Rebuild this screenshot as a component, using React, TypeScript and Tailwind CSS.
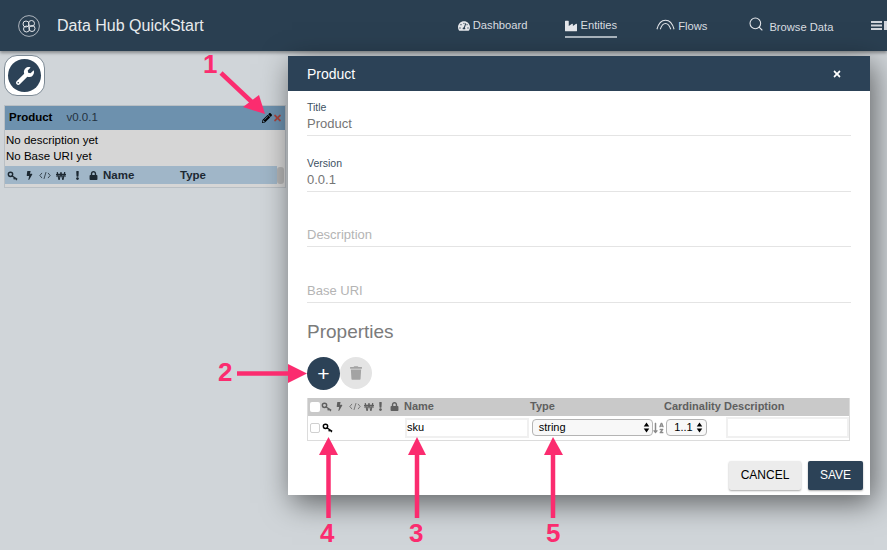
import { Search } from 'lucide-react';
import {
  FaBolt,
  FaExclamation,
  FaIndustry,
  FaLock,
  FaPencilAlt,
  FaSortAlphaDown,
  FaTachometerAlt,
  FaTimes,
  FaTrash,
  FaWonSign,
  FaWrench,
} from 'react-icons/fa';

const font = { fontFamily: '"Liberation Sans", Arial, sans-serif' };

function KeyIcon({ className }: { className?: string }) {
  return (
    <svg viewBox="0 0 14 12" className={className} fill="none" stroke="currentColor">
      <circle cx="4" cy="4" r="2.6" strokeWidth="1.7" />
      <path d="M6 6l6 4M9 8l-1 2M11.5 9.5l-1 1.5" strokeWidth="1.6" />
    </svg>
  );
}

function CodeIcon({ className }: { className?: string }) {
  return (
    <svg viewBox="0 0 14 10" className={className} fill="none" stroke="currentColor" strokeWidth="0.9">
      <path d="M3.5 2L1 5l2.500 3M10.500 2L13 5l-2.500 3M8.200 1L5.800 9" />
    </svg>
  );
}

function Carets() {
  return (
    <svg viewBox="0 0 7 12" className="h-[11px] w-[7px] text-black" fill="currentColor">
      <path d="M3.500 0.500L6.500 4.800H0.500zM3.500 11.500L0.500 7.200H6.500z" />
    </svg>
  );
}

function Logo() {
  return (
    <svg viewBox="0 0 22 22" className="h-[22px] w-[22px] text-gray-200" fill="none" stroke="currentColor" strokeWidth="1">
      <circle cx="11" cy="11" r="10.400" strokeWidth="0.700" />
      <circle cx="8" cy="9" r="3" />
      <circle cx="13.500" cy="8.500" r="3" />
      <circle cx="8.500" cy="14" r="3" />
      <circle cx="14" cy="13.500" r="3" />
    </svg>
  );
}

function FlowsIcon() {
  return (
    <svg viewBox="0 0 20 11" className="mb-[5px] h-[11px] w-[19px] text-gray-200" fill="none" stroke="currentColor" strokeWidth="1.100">
      <path d="M1 10.500C3 3 7 1 10 1s7 2 9 9.500" />
      <path d="M4.500 10.500C6 6 8 4.500 10 4.500s4 1.500 5.500 6" />
    </svg>
  );
}

function NavLink({ icon, label, active }: { icon: React.ReactNode; label: string; active?: boolean }) {
  return (
    <div className={`flex items-center gap-[3px] ${active ? 'mt-[2px] h-[22px] border-b-2 border-[#a9b4bd]' : 'h-[20px]'}`}>
      {icon}
      <span className="whitespace-nowrap text-[11.2px] text-[#d9dde0]">{label}</span>
    </div>
  );
}

function Navbar() {
  return (
    <div className="flex h-[51px] items-center overflow-hidden bg-[#2a3f51] shadow-[0_2px_3px_rgba(0,0,0,0.35)]">
      <div className="ml-[18px] shrink-0">
        <Logo />
      </div>
      <div className="ml-[17px] shrink-0 whitespace-nowrap text-[16px] text-[#e8ebed]">Data Hub QuickStart</div>
      <div className="ml-[254px] flex shrink-0 items-center">
        <NavLink icon={<FaTachometerAlt className="h-[12px] w-[12px] text-gray-200" />} label="Dashboard" />
        <div className="ml-[38px]">
          <NavLink active icon={<FaIndustry className="h-[12px] w-[12px] text-gray-200" />} label="Entities" />
        </div>
        <div className="ml-[39px] mt-[2px]">
          <NavLink icon={<FlowsIcon />} label="Flows" />
        </div>
        <div className="ml-[41px] mt-[1px] flex items-center gap-[5px]">
          <Search className="mb-[5px] h-[16px] w-[16px] text-gray-200" strokeWidth={1.600} />
          <span className="mt-[2px] whitespace-nowrap text-[11.2px] text-[#d9dde0]">Browse Data</span>
        </div>
        <svg viewBox="0 0 16 10" className="ml-[38px] h-[10px] w-[16px] shrink-0 text-gray-300" fill="currentColor">
          <path d="M0 0h11v2H0zM0 3.500h11v2H0zM0 7h11v2H0zM13 0h3v9h-3z" />
        </svg>
      </div>
    </div>
  );
}

function EntityCard() {
  return (
    <div className="ml-1 mt-[9px] w-[282px] border border-[#b9bfc4] bg-[#d6d6d6] text-[11.500px] text-black">
      <div className="flex h-[24px] items-center bg-[#6d91ae] pl-[4px] pr-[3px]">
        <span className="font-bold">Product</span>
        <span className="ml-[14px] text-[#24323f]">v0.0.1</span>
        <FaPencilAlt className="ml-auto h-[10px] w-[10px] text-black" />
        <FaTimes className="ml-px h-[10px] w-[9px] text-[#a8433d]" />
      </div>
      <div className="px-px pt-[2px] leading-[16px]">
        <div>No description yet</div>
        <div>No Base URI yet</div>
      </div>
      <div className="mt-[2px] flex items-center">
        <div className="flex h-[18px] w-[272px] items-center bg-[#a0b6c8] pt-px text-[#1c2832]">
          <div className="flex w-[16px] justify-center">
            <KeyIcon className="h-[10px] w-[12px]" />
          </div>
          <div className="flex w-[16px] justify-center">
            <FaBolt className="h-[9px] w-[9px]" />
          </div>
          <div className="flex w-[16px] justify-center">
            <CodeIcon className="h-[9px] w-[12px]" />
          </div>
          <div className="flex w-[16px] justify-center">
            <FaWonSign className="h-[10px] w-[10px]" />
          </div>
          <div className="flex w-[16px] justify-center">
            <FaExclamation className="h-[9px] w-[9px]" />
          </div>
          <div className="flex w-[16px] justify-center">
            <FaLock className="h-[9px] w-[9px]" />
          </div>
          <span className="ml-[2px] w-[77px] font-bold">Name</span>
          <span className="font-bold">Type</span>
        </div>
        <div className="ml-auto mr-[1px] h-[17px] w-[7px] rounded-[3px] bg-[#b5b5b5]" />
      </div>
      <div className="h-[3px]" />
    </div>
  );
}

function Field({ label, value }: { label?: string; value: string }) {
  return (
    <div>
      <div className="h-[17px] text-[10.500px] leading-[16px] text-[#3d5163]">{label}</div>
      <div className={`h-[16px] text-[13px] leading-[16px] ${label ? 'text-[#757575]' : 'text-[#b4b4b4]'}`}>{value}</div>
      <div className="mt-[3px] h-px bg-[#e4e4e4]" />
    </div>
  );
}

function PropertyTable() {
  return (
    <div className="mt-[8px] w-[543px] border-x border-b border-[#dcdcdc] text-[11px]">
      <div className="flex h-[18px] items-center bg-[#c9c9c9] font-bold text-[#5f5f5f]">
        <div className="ml-[2px] h-[10px] w-[10px] rounded-[2px] bg-white" />
        <KeyIcon className="ml-px h-[10px] w-[12px]" />
        <FaBolt className="ml-[3px] h-[9px] w-[7px]" />
        <CodeIcon className="ml-[6px] h-[9px] w-[12px]" />
        <FaWonSign className="ml-[3px] h-[10px] w-[10px]" />
        <FaExclamation className="ml-[3px] h-[9px] w-[7px]" />
        <FaLock className="ml-[6px] h-[9px] w-[9px]" />
        <span className="ml-[5px] w-[126px]">Name</span>
        <span className="w-[134px]">Type</span>
        <span className="w-[60px]">Cardinality</span>
        <span>Description</span>
      </div>
      <div className="flex h-[24px] items-center bg-white text-[11px] text-black">
        <div className="ml-[2px] h-[10px] w-[10px] rounded-[2px] border border-[#d0d0d0]" />
        <KeyIcon className="ml-[2px] h-[10px] w-[12px]" />
        <div className="ml-[71px] flex h-[20px] w-[124px] items-center border-2 border-[#f0f0f0]">sku</div>
        <div className="ml-[3px] flex h-[17px] w-[122px] items-center justify-between rounded-[4px] border border-[#b4b4b4] bg-[#f8f8f8] pl-[6px] pr-[2px]">
          <span>string</span>
          <Carets />
        </div>
        <FaSortAlphaDown className="h-[12px] w-[11px] text-[#8a8a8a]" />
        <div className="ml-[2px] flex h-[17px] w-[41px] items-center justify-between rounded-[4px] border border-[#b4b4b4] bg-[#f8f8f8] pl-[7px] pr-[3px]">
          <span>1..1</span>
          <Carets />
        </div>
        <div className="ml-[19px] h-[21px] w-[123px] border-2 border-[#f0f0f0]" />
      </div>
    </div>
  );
}

function EntityModal() {
  return (
    <div className="absolute left-[288px] top-[56px] h-[439px] w-[582px] bg-white shadow-[4px_8px_28px_rgba(0,0,0,0.55)]">
      <div className="flex h-[35px] items-center justify-between bg-[#2c4257] pl-[19px] pr-[28px] pt-px">
        <span className="text-[14px] text-white">Product</span>
        <FaTimes className="h-[10px] w-[10px] text-white" />
      </div>
      <div className="pl-[19px] pr-[19px] pt-[8px]">
        <div className="flex flex-col gap-[18.500px]">
          <Field label="Title" value="Product" />
          <Field label="Version" value="0.0.1" />
          <Field value="Description" />
          <Field value="Base URI" />
        </div>
        <div className="mt-[17px] text-[19px] leading-[24px] text-[#7b7b7b]">Properties</div>
        <div className="mt-[13px] flex items-center">
          <div className="flex h-[33px] w-[33px] items-center justify-center rounded-full bg-[#2c4257] text-[21px] leading-none text-white">+</div>
          <div className="flex h-[32px] w-[32px] items-center justify-center rounded-full bg-[#e4e4e4]">
            <FaTrash className="h-[14px] w-[12px] text-[#a3a3a3]" />
          </div>
        </div>
        <PropertyTable />
      </div>
      <div className="mt-[20px] flex justify-end gap-[7px] pr-[7px]">
        <div className="flex h-[29px] w-[72px] items-center justify-center rounded-[2px] bg-[#ececec] text-[12px] text-black shadow-[0_1px_2px_rgba(0,0,0,0.35)]">CANCEL</div>
        <div className="flex h-[29px] w-[55px] items-center justify-center rounded-[2px] bg-[#2c4257] text-[12px] text-white shadow-[0_1px_2px_rgba(0,0,0,0.35)]">SAVE</div>
      </div>
    </div>
  );
}

function Callouts() {
  const pink = '#fb2c6f';
  return (
    <svg viewBox="0 0 887 550" className="pointer-events-none absolute left-0 top-0 h-[550px] w-[887px]" fill={pink}>
      <path d="M221 73L255 105" stroke={pink} strokeWidth="4.500" />
      <path d="M265 114L259 95L243 107z" />
      <path d="M237 373.500H290" stroke={pink} strokeWidth="4.500" />
      <path d="M307 373.500L288 364V383z" />
      <path d="M328.500 518V450" stroke={pink} strokeWidth="4.500" />
      <path d="M328.500 437L319 455H338z" />
      <path d="M417 518V450" stroke={pink} strokeWidth="4.500" />
      <path d="M417 437L408 455H426z" />
      <path d="M553 518V450" stroke={pink} strokeWidth="4.500" />
      <path d="M553 437L544 455H563z" />
      <g fontFamily='"Liberation Sans", Arial, sans-serif' fontWeight="700" fontSize="26">
        <text x="203" y="73">1</text>
        <text x="218" y="381">2</text>
        <text x="320" y="542">4</text>
        <text x="409" y="542">3</text>
        <text x="546" y="542">5</text>
      </g>
    </svg>
  );
}

export default function App() {
  return (
    <div style={font} className="relative h-[550px] w-[887px] overflow-hidden bg-[#d0d5d9]">
      <Navbar />
      <div className="ml-1 mt-[4px] flex h-[41px] w-[41px] items-center justify-center rounded-[13px] border border-[#7d8a95] bg-white">
        <div className="flex h-[33px] w-[33px] items-center justify-center rounded-full bg-[#2c4257]">
          <FaWrench className="h-[18px] w-[18px] text-white" />
        </div>
      </div>
      <EntityCard />
      <EntityModal />
      <Callouts />
    </div>
  );
}
